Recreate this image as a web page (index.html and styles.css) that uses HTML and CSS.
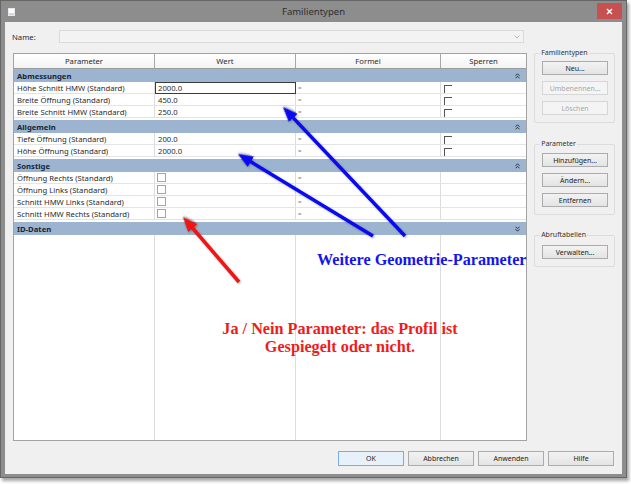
FILE: index.html
```html
<!DOCTYPE html>
<html lang="de">
<head>
    <meta charset="utf-8">
    <title>Familientypen</title>
    <link rel="stylesheet" href="styles.css">
</head>
<body>
    <div class="window">
        <div class="titlebar">
            <span class="app-icon"></span>
            <span class="title">Familientypen</span>
            <span class="close">
                <svg width="7" height="7" viewBox="0 0 7 7"><path d="M1 1 L6 6 M6 1 L1 6" stroke="#fff" stroke-width="1.4"/></svg>
            </span>
        </div>

        <div class="client">
            <div class="name-row">
                <label>Name:</label>
                <div class="combo">
                    <svg width="6" height="4" viewBox="0 0 6 4"><path d="M0.5 0.5 L3 3 L5.5 0.5" fill="none" stroke="#a8a8a8" stroke-width="0.8"/></svg>
                </div>
            </div>

            <div class="main">
                <div class="grid">
                    <div class="cols head">
                        <div>Parameter</div>
                        <div>Wert</div>
                        <div>Formel</div>
                        <div>Sperren</div>
                    </div>

                    <div class="group">Abmessungen <i class="fold up"></i></div>
                    <div class="cols row">
                        <div>Höhe Schnitt HMW (Standard)</div>
                        <div class="edit">2000.0</div>
                        <div class="eq">=</div>
                        <div><span class="lock"></span></div>
                    </div>
                    <div class="cols row">
                        <div>Breite Öffnung (Standard)</div>
                        <div>450.0</div>
                        <div class="eq">=</div>
                        <div><span class="lock"></span></div>
                    </div>
                    <div class="cols row">
                        <div>Breite Schnitt HMW (Standard)</div>
                        <div>250.0</div>
                        <div class="eq">=</div>
                        <div><span class="lock"></span></div>
                    </div>

                    <div class="group spaced">Allgemein <i class="fold up"></i></div>
                    <div class="cols row">
                        <div>Tiefe Öffnung (Standard)</div>
                        <div>200.0</div>
                        <div class="eq">=</div>
                        <div><span class="lock"></span></div>
                    </div>
                    <div class="cols row">
                        <div>Höhe Öffnung (Standard)</div>
                        <div>2000.0</div>
                        <div class="eq">=</div>
                        <div><span class="lock"></span></div>
                    </div>

                    <div class="group spaced">Sonstige <i class="fold up"></i></div>
                    <div class="cols row">
                        <div>Öffnung Rechts (Standard)</div>
                        <div class="chk"><span class="box"></span></div>
                        <div class="eq">=</div>
                        <div></div>
                    </div>
                    <div class="cols row">
                        <div>Öffnung Links (Standard)</div>
                        <div class="chk"><span class="box"></span></div>
                        <div class="eq"></div>
                        <div></div>
                    </div>
                    <div class="cols row">
                        <div>Schnitt HMW Links (Standard)</div>
                        <div class="chk"><span class="box"></span></div>
                        <div class="eq">=</div>
                        <div></div>
                    </div>
                    <div class="cols row">
                        <div>Schnitt HMW Rechts (Standard)</div>
                        <div class="chk"><span class="box"></span></div>
                        <div class="eq">=</div>
                        <div></div>
                    </div>

                    <div class="group spaced">ID-Daten <i class="fold down"></i></div>
                    <div class="cols filler">
                        <div></div><div></div><div></div><div></div>
                    </div>
                </div>

                <div class="side">
                    <fieldset>
                        <legend>Familientypen</legend>
                        <button>Neu...</button>
                        <button disabled>Umbenennen...</button>
                        <button disabled>Löschen</button>
                    </fieldset>
                    <fieldset class="params">
                        <legend>Parameter</legend>
                        <button>Hinzufügen...</button>
                        <button>Ändern...</button>
                        <button>Entfernen</button>
                    </fieldset>
                    <fieldset class="lookup">
                        <legend>Abruftabellen</legend>
                        <button>Verwalten...</button>
                    </fieldset>
                </div>
            </div>

            <div class="footer">
                <button class="default">OK</button>
                <button>Abbrechen</button>
                <button>Anwenden</button>
                <button>Hilfe</button>
            </div>
        </div>
    </div>

    <!-- hand-drawn notes on top of the dialog -->
    <div class="notes">
        <svg class="arrows" width="631" height="484" viewBox="0 0 631 484">
            <defs>
                <marker id="head-blue" markerUnits="userSpaceOnUse" markerWidth="16" markerHeight="12" refX="9" refY="6" orient="auto">
                    <path d="M0 0 L15 6 L0 12 z" fill="#0a0af2"/>
                </marker>
                <marker id="head-red" markerUnits="userSpaceOnUse" markerWidth="16" markerHeight="12" refX="9" refY="6" orient="auto">
                    <path d="M0 0 L15 6 L0 12 z" fill="#f01414"/>
                </marker>
            </defs>
            <path d="M405 236 L287.1 111.4" stroke="#0a0af2" stroke-width="3.5" marker-end="url(#head-blue)"/>
            <path d="M373 236 L243.1 157.1" stroke="#0a0af2" stroke-width="3.5" marker-end="url(#head-blue)"/>
            <path d="M239 282 L186.9 221.5" stroke="#f01414" stroke-width="3.5" marker-end="url(#head-red)"/>
        </svg>
        <div class="note-blue">Weitere Geometrie-Parameter</div>
        <div class="note-red">Ja / Nein Parameter: das Profil ist<br>Gespiegelt oder nicht.</div>
    </div>
</body>
</html>
```

FILE: styles.css
```css
* {
    box-sizing: border-box;
}

body {
    margin: 0;
    position: relative;
    width: 631px;
    height: 484px;
    overflow: hidden;
    background: #fff;
    font-family: "Noto Sans", "Open Sans", sans-serif;
    font-size: 7.7px;
    color: #2a2a2a;
}

/* dialog frame */
.window {
    width: 627px;
    height: 478px;
    display: flex;
    flex-direction: column;
    background: #8d8d8d;
    border: 1px solid #666;
    padding: 0 4px 3px;
    box-shadow: 2px 3px 3px rgba(0, 0, 0, 0.35);
}

.titlebar {
    height: 21px;
    display: grid;
    grid-template-columns: 1fr auto 1fr;
    align-items: center;
}

.app-icon {
    width: 7px;
    height: 8px;
    margin-left: 3px;
    background: linear-gradient(#fff 0 60%, #cfd8e6 60%);
    border: 1px solid #e8e8e8;
}

.title {
    font-size: 9.5px;
    color: #2e2e2e;
}

.close {
    justify-self: end;
    align-self: start;
    margin-top: 2px;
    width: 25px;
    height: 16px;
    background: #c75050;
    display: flex;
    align-items: center;
    justify-content: center;
}

.client {
    flex: 1;
    display: flex;
    flex-direction: column;
    background: #f0f0f0;
    padding: 8px 7px 8px 8px;
}

/* name selector */
.name-row {
    height: 13px;
    display: flex;
    align-items: center;
}

.name-row label {
    width: 47px;
    margin-left: -1px;
}

.combo {
    width: 465px;
    height: 13px;
    display: flex;
    align-items: center;
    justify-content: flex-end;
    padding-right: 3px;
    background: #f3f3f3;
    border: 1px solid #dadada;
}

.main {
    margin-top: 10px;
    height: 388px;
    display: flex;
    gap: 7px;
}

/* parameter grid */
.grid {
    width: 515px;
    display: flex;
    flex-direction: column;
    background: #fff;
    border: 1px solid #a3a3a3;
}

.cols {
    display: grid;
    grid-template-columns: 141px 141px 145px 1fr;
}

.head {
    height: 15px;
    border-bottom: 1px solid #9c9c9c;
    background: linear-gradient(#fff, #f3f3f3);
}

.head div {
    display: flex;
    align-items: center;
    justify-content: center;
    border-right: 1px solid #a6a6a6;
}

.head div:last-child {
    border-right: none;
}

.group {
    height: 13px;
    display: flex;
    align-items: center;
    justify-content: space-between;
    padding: 0 6px 0 3px;
    background: #9cb4d0;
    color: #1a2535;
    font-weight: bold;
}

.group.spaced {
    margin-top: 2px;
}

.fold {
    width: 5px;
    height: 6px;
}

.fold.up {
    background: url("data:image/svg+xml,%3Csvg xmlns='http://www.w3.org/2000/svg' width='5' height='6'%3E%3Cpath d='M0.5 2.8 L2.5 0.8 L4.5 2.8 M0.5 5.3 L2.5 3.3 L4.5 5.3' fill='none' stroke='%23222' stroke-width='0.9'/%3E%3C/svg%3E");
}

.fold.down {
    background: url("data:image/svg+xml,%3Csvg xmlns='http://www.w3.org/2000/svg' width='5' height='6'%3E%3Cpath d='M0.5 0.7 L2.5 2.7 L4.5 0.7 M0.5 3.2 L2.5 5.2 L4.5 3.2' fill='none' stroke='%23222' stroke-width='0.9'/%3E%3C/svg%3E");
}

.row {
    height: 12px;
    border-bottom: 1px solid #e4e4e4;
}

.row div {
    display: flex;
    align-items: center;
    padding-left: 3px;
    white-space: nowrap;
    overflow: hidden;
    border-right: 1px solid #dcdcdc;
}

.row div:last-child {
    border-right: none;
}

.row .edit {
    outline: 1px solid #3c3c3c;
    outline-offset: -1px;
    margin-bottom: -1px;
}

.row .eq {
    font-size: 6px;
    color: #777;
    padding-left: 2px;
}

.row .chk {
    padding-left: 2px;
}

.box {
    width: 9px;
    height: 9px;
    background: #fff;
    border: 1px solid #a4a4a4;
}

.lock {
    width: 8px;
    height: 8px;
    margin-top: 2px;
    border-top: 1px solid #555;
    border-left: 1px solid #555;
}

.filler {
    flex: 1;
}

.filler div {
    border-right: 1px solid #dcdcdc;
}

.filler div:last-child {
    border-right: none;
}

/* right-hand buttons */
.side {
    width: 81px;
    margin-top: -5px;
    display: flex;
    flex-direction: column;
}

fieldset {
    margin: 0;
    padding: 3px 6px 7px 7px;
    border: 1px solid #dcdcdc;
    border-radius: 2px;
}

fieldset.params {
    margin-top: 16px;
    padding-top: 4px;
}

fieldset.lookup {
    margin-top: 15px;
    padding-top: 5px;
}

legend {
    margin-left: -2px;
    padding: 0 1px;
    font-size: 7px;
    line-height: 10px;
    color: #333;
}

button {
    font-family: inherit;
    font-size: 7px;
    color: #222;
    height: 14px;
    padding: 0;
    background: linear-gradient(#f2f2f2, #e4e4e4);
    border: 1px solid #acacac;
}

.side button {
    display: block;
    width: 100%;
}

.side button + button {
    margin-top: 6px;
}

button:disabled {
    color: #a8a8a8;
    background: #f4f4f4;
    border-color: #d6d6d6;
}

.footer {
    margin-top: 10px;
    padding-right: 1px;
    display: flex;
    justify-content: flex-end;
    gap: 4px;
}

.footer button {
    width: 66px;
    height: 15px;
}

.footer .default {
    background: #e7f1fa;
    border-color: #78aee3;
}

/* annotation layer */
.notes {
    position: absolute;
    inset: 0;
    pointer-events: none;
}

.arrows {
    display: block;
}

.arrows path {
    filter: drop-shadow(1px 1px 1px rgba(0, 0, 0, 0.3));
}

.note-blue {
    position: absolute;
    left: 317px;
    top: 251px;
    font: bold 16.2px/18px "Liberation Serif", serif;
    color: #1414f0;
}

.note-red {
    position: absolute;
    left: 190px;
    top: 320px;
    width: 300px;
    text-align: center;
    font: bold 16.2px/18px "Liberation Serif", serif;
    color: #f01c1c;
}
```
